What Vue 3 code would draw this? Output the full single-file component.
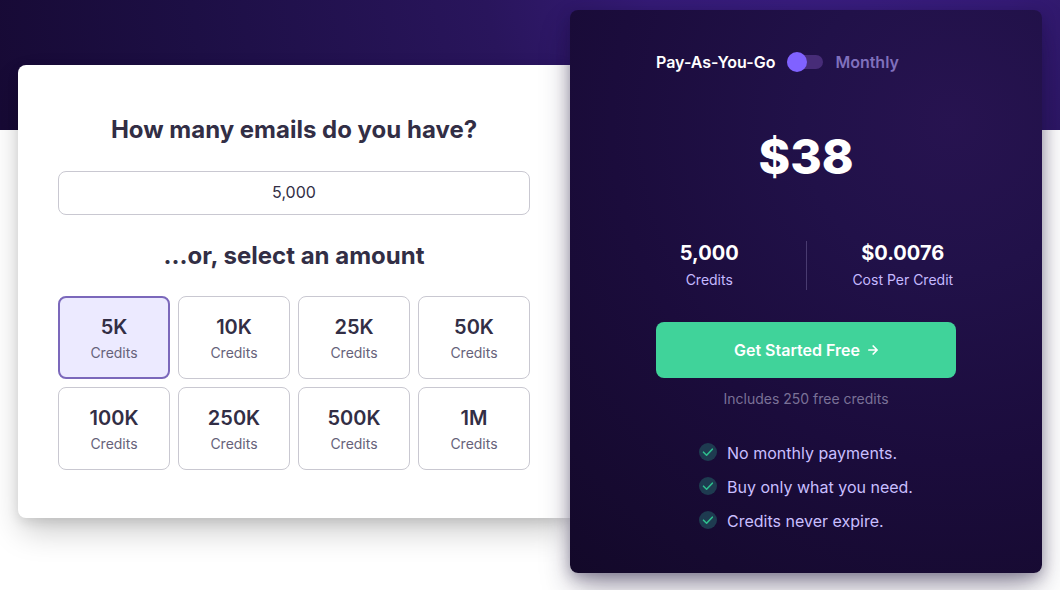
<script setup>
import { ref } from 'vue'

const amount = ref('5,000')
const monthly = ref(false)
const selected = ref('5K')
const options = ['5K', '10K', '25K', '50K', '100K', '250K', '500K', '1M']
const features = ['No monthly payments.', 'Buy only what you need.', 'Credits never expire.']
</script>

<template>
  <main class="page">
    <section class="panel">
      <h2 class="title"><label for="emails">How many emails do you have?</label></h2>
      <input id="emails" v-model="amount" class="amount" type="text" inputmode="numeric" />
      <h2 id="pick" class="title second">...or, select an amount</h2>
      <div class="options" role="group" aria-labelledby="pick">
        <button
          v-for="o in options"
          :key="o"
          type="button"
          class="option"
          :class="{ active: o === selected }"
          :aria-pressed="o === selected"
          @click="selected = o"
        >
          <strong>{{ o }}</strong>
          <span>Credits</span>
        </button>
      </div>
    </section>

    <section class="summary">
      <div class="content">
        <label class="plan">
          <span>Pay-As-You-Go</span>
          <input v-model="monthly" class="switch" type="checkbox" role="switch" />
          <span class="muted">Monthly</span>
        </label>
        <p class="price">$38</p>
        <div class="stats">
          <div class="stat"><strong>5,000</strong><span>Credits</span></div>
          <div class="rule"></div>
          <div class="stat"><strong>$0.0076</strong><span>Cost Per Credit</span></div>
        </div>
        <button type="button" class="cta">
          Get Started Free
          <svg width="10" height="10" viewBox="0 0 10 10" fill="none" stroke="currentColor" stroke-width="1.7" stroke-linecap="round" stroke-linejoin="round" aria-hidden="true">
            <path d="M0.9 5H9.1M5.2 1L9.1 5L5.2 9" />
          </svg>
        </button>
        <p class="note">Includes 250 free credits</p>
        <ul class="features">
          <li v-for="f in features" :key="f">
            <svg width="18" height="18" viewBox="0 0 18 18" fill="none" aria-hidden="true">
              <circle cx="9" cy="9" r="9" fill="#1e3b50" />
              <path d="M4.5 9.2L7.6 12.2L13.3 6.2" stroke="#2fbf8e" stroke-width="1.6" stroke-linecap="round" stroke-linejoin="round" />
            </svg>
            <span>{{ f }}</span>
          </li>
        </ul>
      </div>
    </section>
  </main>
</template>

<style>
body {
  margin: 0;
  background: #fff;
}
</style>

<style scoped>
.page {
  display: grid;
  grid-template-columns: 552fr 472fr;
  align-items: center;
  padding: 10px 18px 17px;
  background: radial-gradient(circle at 830px -60px, #3a1e80 0, #351b76 190px, #29155c 350px, #1d0f45 640px, #170a35 850px) no-repeat top / 100% 130px;
  font-family: Inter, "Liberation Sans", sans-serif;
  color: #322e45;
  overflow: hidden;
}

.page *,
.page {
  box-sizing: border-box;
}

.panel {
  padding: 49px 40px 48px;
  background: #fff;
  border-radius: 8px 0 0 8px;
  box-shadow: 0 16px 32px -4px rgba(0, 0, 0, 0.22), 0 4px 12px rgba(0, 0, 0, 0.1);
}

.title {
  margin: 0 0 25px;
  font-size: 24px;
  line-height: 32px;
  font-weight: 700;
  text-align: center;
}

.second {
  margin: 25px 0 24px;
}

.amount {
  display: block;
  width: 100%;
  height: 44px;
  padding: 0 16px 2px;
  border: 1px solid #c9c8d1;
  border-radius: 8px;
  background: #fff;
  color: inherit;
  font: 400 16px/24px Inter, "Liberation Sans", sans-serif;
  text-align: center;
}

.options {
  display: grid;
  grid-template-columns: repeat(4, 1fr);
  gap: 8px;
}

.option {
  display: flex;
  flex-direction: column;
  align-items: center;
  justify-content: center;
  height: 83px;
  padding: 2px 0 0;
  border: 1px solid #c9c8d1;
  border-radius: 8px;
  background: #fff;
  color: inherit;
  font-family: inherit;
}

.option.active {
  border: 2px solid #7b68bb;
  background: #eceaff;
}

.option strong {
  font-size: 20px;
  line-height: 28px;
  font-weight: 600;
}

.option span {
  font-size: 14px;
  line-height: 24px;
  color: #66627a;
}

.summary {
  position: relative;
  display: flex;
  justify-content: center;
  padding: 40px 0;
  border-radius: 8px;
  background: radial-gradient(circle at 382px 112px, #271350 0, #211149 150px, #1b0c3c 340px, #160a30 500px, #120827 620px);
  box-shadow: 0 16px 32px -4px rgba(20, 10, 50, 0.4), 0 4px 14px rgba(20, 10, 50, 0.3);
  color: #fff;
}

.content {
  width: 300px;
}

.plan {
  display: flex;
  align-items: center;
  gap: 12px;
  font-size: 16px;
  line-height: 24px;
  font-weight: 600;
}

.muted {
  color: #8070bd;
}

.switch {
  appearance: none;
  display: flex;
  align-items: center;
  width: 36px;
  height: 14px;
  margin: 0;
  border-radius: 7px;
  background: #472c78;
}

.switch::before {
  content: "";
  width: 20px;
  height: 20px;
  flex: none;
  border-radius: 50%;
  background: #8062ff;
}

.switch:checked {
  justify-content: flex-end;
}

.price {
  margin: 51px 0 52px;
  font-size: 48px;
  line-height: 64px;
  font-weight: 800;
  text-align: center;
}

.stats {
  display: grid;
  grid-template-columns: 1fr 1px 1fr;
  gap: 43px;
}

.rule {
  background: #493b70;
}

.stat {
  display: flex;
  flex-direction: column;
  align-items: center;
  white-space: nowrap;
}

.stat strong {
  font-size: 20px;
  line-height: 24px;
  font-weight: 700;
}

.stat span {
  font-size: 14px;
  line-height: 20px;
  margin-top: 5px;
  color: #c5b9ff;
}

.cta {
  display: flex;
  align-items: center;
  justify-content: center;
  gap: 8px;
  width: 100%;
  height: 56px;
  margin-top: 32px;
  padding: 0;
  border: 0;
  border-radius: 8px;
  background: #40d39a;
  color: #fff;
  font: 600 16px/24px Inter, "Liberation Sans", sans-serif;
}

.note {
  margin: 9px 0 0;
  font-size: 14px;
  line-height: 24px;
  text-align: center;
  color: #7a7197;
}

.features {
  display: grid;
  gap: 10px;
  width: fit-content;
  margin: 30px auto 0;
  padding: 0;
  list-style: none;
  font-size: 16px;
  line-height: 24px;
  color: #c9bfff;
}

.features li {
  display: flex;
  align-items: flex-start;
  gap: 10px;
}

.features svg {
  margin-top: 2px;
}
</style>
